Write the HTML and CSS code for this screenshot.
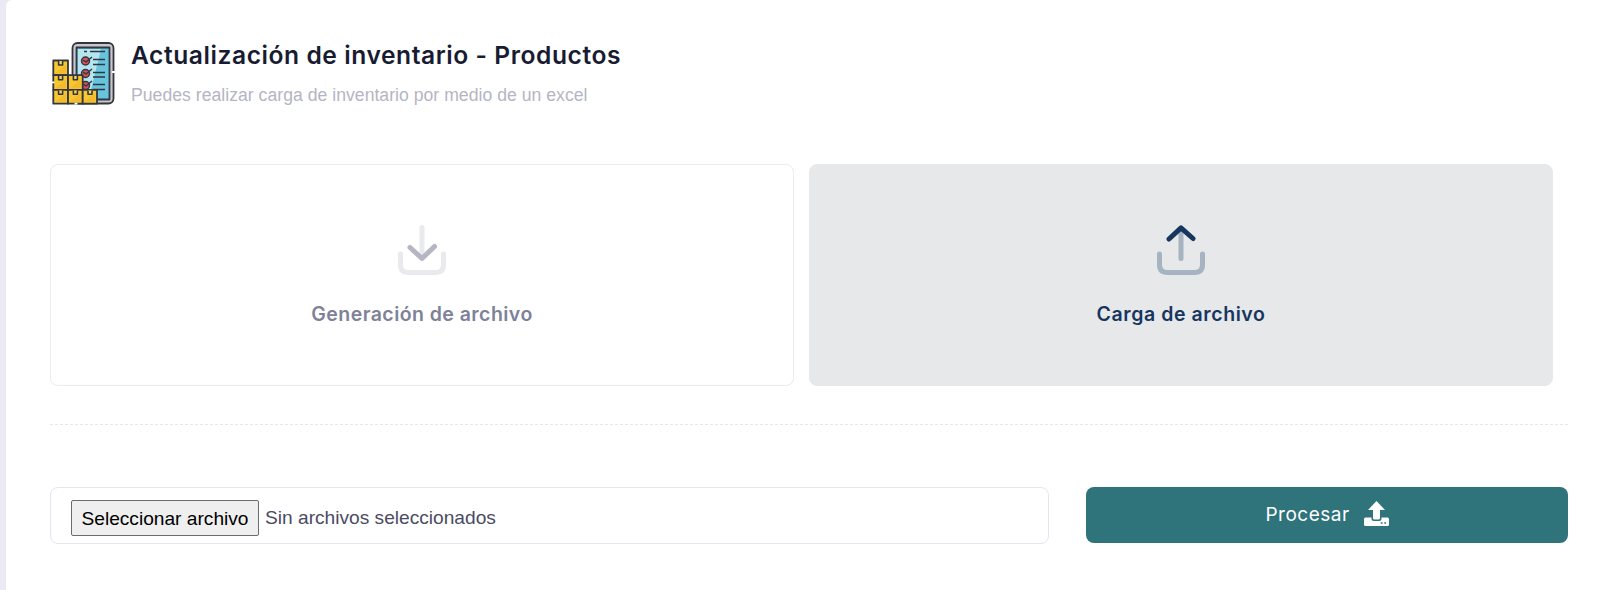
FILE: index.html
```html
<!DOCTYPE html>
<html lang="es">
<head>
    <meta charset="UTF-8">
    <title>Actualización de inventario</title>
    <link rel="stylesheet" href="styles.css">
</head>
<body>

<div class="card">
    <div class="header">
        <svg class="logo" viewBox="0 0 64 64" stroke="#32363f" stroke-width="1.8" stroke-linejoin="round">
            <!-- Tablet -->
            <rect x="21.5" y="2" width="41" height="60.5" rx="5" fill="#c9c8d0"/>
            <rect x="25.5" y="6.5" width="33" height="52" fill="#66c5dc"/>
            <path d="M29 8h21L38 57H27V8z" fill="#b5e5ef" stroke="none"/>
            <path d="M33 10.5h3M39 10.5h15M42 18.5h12M42 23.5h12M42 31.5h12M42 36h12M42 43.5h12M42 48.5h12" stroke-width="1.6"/>
            <g fill="#d5545b" stroke-width="1.4">
                <circle cx="34.5" cy="20" r="4"/>
                <circle cx="34.5" cy="32.5" r="4"/>
                <circle cx="34.5" cy="44.5" r="4"/>
            </g>
            <path d="M32 19l3 2 6-5M32 31l3 2 6-5M32 43l3 2 6-5" fill="none" stroke-width="1.5"/>
            <!-- Boxes -->
            <g fill="#f8c72f">
                <rect x="2.3" y="19.5" width="14.7" height="14.7"/>
                <rect x="2.3" y="34.2" width="14.7" height="14.7"/>
                <rect x="17" y="34.2" width="14.7" height="14.7"/>
                <rect x="2.3" y="48.9" width="14.7" height="13.8"/>
                <rect x="17" y="48.9" width="14.7" height="13.8"/>
                <rect x="31.7" y="48.9" width="14.3" height="13.8"/>
            </g>
            <path d="M4 32.5l11-9v9zM4 47.5l11-9v9zM18.5 47.5l11-9v9zM4 61l11-9v9zM18.5 61l11-9v9zM33 61l11-9v9z" fill="#efad2d" opacity=".5" stroke="none"/>
            <path d="M7.6 20v4h4v-4M7.6 35v3.7h4V35M22.4 35v3.7h4V35M7.6 49.5v3.7h4v-3.7M22.4 49.5v3.7h4v-3.7M37 49.5v3.7h4v-3.7" fill="#f8d75f" stroke-width="1.6"/>
            <path d="M1 41.3h2.6M23.5 62.7h3M61 31h3" stroke="#fff"/>
        </svg>
        <div>
            <h1 class="title">Actualización de inventario - Productos</h1>
            <p class="subtitle">Puedes realizar carga de inventario por medio de un excel</p>
        </div>
    </div>

    <div class="options">
        <div class="option">
            <svg class="option-icon" viewBox="0 0 48 50" fill="none" stroke-width="5" stroke-linecap="round" stroke-linejoin="round">
                <path class="light" d="M24 2.5v30M2.5 29v10.5q0 8 8 8h27q8 0 8-8V29"/>
                <path class="dark" d="M12 22.5l12 11 12.5-12"/>
            </svg>
            <span class="label label-generate">Generación de archivo</span>
        </div>
        <div class="option active">
            <svg class="option-icon" viewBox="0 0 48 50" fill="none" stroke-width="5" stroke-linecap="round" stroke-linejoin="round">
                <path class="light" d="M24 4v29.5M2.5 29v10.5q0 8 8 8h27q8 0 8-8V29"/>
                <path class="dark" d="M12 14L24 2.8 36 13.5"/>
            </svg>
            <span class="label label-upload">Carga de archivo</span>
        </div>
    </div>

    <div class="separator"></div>

    <div class="actions">
        <div class="file-input">
            <button class="file-button">Seleccionar archivo</button>
            <span class="file-name">Sin archivos seleccionados</span>
        </div>
        <button class="process">
            <span class="process-text">Procesar</span>
            <svg class="process-icon" viewBox="0 0 25 25" fill="#fff">
                <path d="M12.5 0L21 9h-5v8q0 1.5-1.5 1.5h-4Q9 18.5 9 17V9H4z"/>
                <path d="M1.5 16.5h6v1q0 2.5 2.5 2.5h5q2.5 0 2.5-2.5v-1h6q1.5 0 1.5 1.5v5.5q0 1.5-1.5 1.5h-22Q0 25 0 23.5V18q0-1.5 1.5-1.5z"/>
                <path d="M16.8 22h1.8M20.3 22h1.8" stroke="#2f737b" stroke-width="1.6"/>
            </svg>
        </button>
    </div>
</div>

</body>
</html>
```
FILE: styles.css
```css
* {
    box-sizing: border-box;
}

body {
    margin: 0;
    height: 590px;
    padding-left: 6px;
    overflow: hidden;
    background: #ebeaf4;
    font-family: Inter, sans-serif;
}

.card {
    height: 600px;
    padding: 41px 36px 0 44px;
    background: #fff;
    border-radius: 6px 0 0 0;
}

.header {
    display: flex;
    gap: 16px;
    height: 123px;
    padding-left: 1px;
}

.logo {
    width: 64px;
    height: 64px;
}

.title {
    margin: 0;
    font-size: 24.6px;
    line-height: 28px;
    font-weight: 600;
    letter-spacing: 0.56px;
    color: #181c32;
    white-space: nowrap;
}

.subtitle {
    margin: 14px 0 0;
    font-family: "Liberation Sans", sans-serif;
    font-size: 17.6px;
    line-height: 24px;
    letter-spacing: 0.03px;
    color: #b5b5c3;
    white-space: nowrap;
}

.options {
    display: grid;
    grid-template-columns: 1fr 1fr;
    gap: 15px;
    height: 222px;
    margin-right: 15px;
}

.option {
    display: flex;
    flex-direction: column;
    align-items: center;
    padding-top: 60px;
    border: 1px solid #ebebf0;
    border-radius: 8px;
    color: #7e8299;
}

.option.active {
    background: #e6e8ea;
    border-color: #e6e8ea;
    color: #16365f;
}

.option-icon {
    width: 48px;
    height: 50px;
}

.light { stroke: #e9e9ee; }
.dark { stroke: #b5b5c3; }
.active .light { stroke: #a6b3c0; }
.active .dark { stroke: #16365f; }

.label {
    margin-top: 26px;
    font-size: 19.5px;
    line-height: 26px;
    font-weight: 600;
    white-space: nowrap;
}

.label-generate { letter-spacing: 0.45px; }
.label-upload { letter-spacing: 0.58px; }

.separator {
    margin-top: 38px;
    border-top: 1px dashed #e6e7ee;
}

.actions {
    display: grid;
    grid-template-columns: 999px 482px;
    gap: 37px;
    margin-top: 62px;
}

.file-input {
    display: flex;
    align-items: flex-start;
    gap: 6px;
    height: 57px;
    padding: 12px 20px;
    border: 1px solid #e4e6ef;
    border-radius: 8px;
    font-family: "Liberation Sans", sans-serif;
    font-size: 19.15px;
    color: #4b4b63;
}

.file-button {
    width: 188px;
    height: 36px;
    padding: 1px 0 0;
    border: 1px solid #6b6b6b;
    border-radius: 2px;
    background: #efefef;
    font: inherit;
    color: #000;
    white-space: nowrap;
}

.file-name {
    line-height: 35px;
}

.process {
    display: flex;
    justify-content: center;
    gap: 14px;
    height: 56px;
    padding: 14px 0 0;
    border: none;
    border-radius: 8px;
    background: #2f737b;
    color: #fff;
    font-family: inherit;
    font-size: 19px;
    letter-spacing: 0.5px;
}

.process-text {
    line-height: 28px;
}

.process-icon {
    width: 25px;
    height: 25px;
}
```
